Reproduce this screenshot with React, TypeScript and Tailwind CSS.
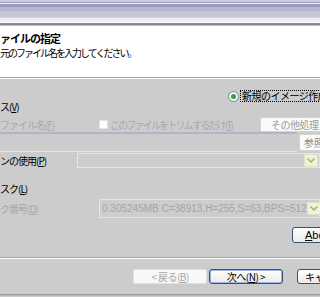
import React from "react";

const jp = { fontFamily: '"Noto Sans CJK JP", "Liberation Sans", sans-serif' };

function Arrow() {
  return (
    <div className="w-[14px] h-[13px] bg-[#f2f2dc] border border-[#e0e0c4] flex items-center justify-center shrink-0">
      <svg width="8" height="5" viewBox="0 0 8 5">
        <path d="M0.5 0.5 L4 4 L7.5 0.5" fill="none" stroke="#a8a868" strokeWidth="1.4" />
      </svg>
    </div>
  );
}

export default function App() {
  const stripes: [number, string][] = [
    [2, "#cacad8"],
    [1, "#9c9cb8"],
    [1, "#f4f4f8"],
    [3, "#9a9ac0"],
    [4, "#b6b6cc"],
    [6, "#c6c6d6"],
    [1, "#d6d6de"],
    [4, "#eeeef2"],
    [1, "#ffffff"],
    [2, "#8a8a8a"],
    [1, "#bcbcbc"],
  ];
  return (
    <div
      className="w-[320px] h-[297px] overflow-hidden bg-[#cccccc] flex flex-col text-[10px] text-black"
      style={jp}
    >
      {stripes.map(([h, c], i) => (
        <div key={i} className="w-full shrink-0" style={{ height: h, background: c }} />
      ))}
      {/* header */}
      <div className="h-[51px] bg-white shrink-0 flex flex-col pt-[6px]">
        <div className="font-bold text-[11px] leading-[13px] tracking-[-1px] whitespace-nowrap">ァイルの指定</div>
        <div className="text-[10px] leading-[13px] tracking-[-2px] whitespace-nowrap mt-[1px]">元のファイル名を入力してください。</div>
      </div>
      <div className="h-[1px] bg-[#a4a4a4] shrink-0" />
      <div className="h-[1px] bg-white shrink-0" />
      {/* gray area */}
      <div className="h-[178px] shrink-0 flex flex-col">
        {/* radio row */}
        <div className="h-[10px] mt-[12px] flex items-center pl-[228px] whitespace-nowrap">
          <svg width="11" height="11" viewBox="0 0 11 11" className="shrink-0">
            <circle cx="5.5" cy="5.5" r="5" fill="#f4f4f0" stroke="#6e8aa4" strokeWidth="1" />
            <circle cx="5.5" cy="5.5" r="2.5" fill="#3a9e3a" />
          </svg>
          <span className="ml-[1px] border border-dotted border-black px-[1px] leading-[10px] tracking-[-0.5px]">新規のイメージ作成</span>
        </div>
        <div className="h-[11px] leading-[11px] whitespace-nowrap tracking-[-1px]">
          ス(<span className="underline">V</span>)
        </div>
        {/* file row */}
        <div className="h-[16px] mt-[4px] flex items-center whitespace-nowrap text-[#a8a8a8]">
          <span className="w-[99px] shrink-0 tracking-[-1px]">ファイル名(<span className="underline">F</span>)</span>
          <span className="w-[9px] h-[9px] bg-white border border-[#e4e4e4] shrink-0" />
          <span className="ml-[2px] w-[150px] shrink-0 tracking-[-1.8px]">このファイルをトリムするだけ(<span className="underline">T</span>)</span>
          <div className="w-[70px] h-[15px] bg-[#fafafa] border border-[#d4d4d4] rounded-[2px] flex items-center pl-[10px] text-[#9a9a9a] shrink-0 tracking-[-0.5px]">
            その他処理
          </div>
        </div>
        {/* textbox row */}
        <div className="h-[20px] flex items-start">
          <div className="w-[297px] h-[20px] border-t-[2px] border-t-[#b2b2c8] border-b border-b-[#e6e6e6] shrink-0" />
          <div className="ml-[2px] mt-[2px] w-[40px] h-[17px] bg-[#fafafa] border border-[#d4d4d4] rounded-[2px] flex items-center pl-[4px] text-[#8a8a8a] shrink-0 whitespace-nowrap">
            参照...
          </div>
        </div>
        {/* combo row */}
        <div className="h-[15px] mt-[1px] flex items-center whitespace-nowrap">
          <span className="w-[77px] shrink-0 tracking-[-1px]">ンの使用(<span className="underline">P</span>)</span>
          <div className="w-[243px] h-[15px] border border-[#e6e6e6] bg-[#cdcdcd] flex items-center justify-end pr-[1px] shrink-0">
            <Arrow />
          </div>
        </div>
        <div className="h-[11px] mt-[15px] leading-[11px] whitespace-nowrap tracking-[-1px]">
          スク(<span className="underline">L</span>)
        </div>
        {/* disk row */}
        <div className="h-[19px] mt-[5px] flex items-center whitespace-nowrap">
          <span className="w-[99px] shrink-0 text-[#a8a8a8] tracking-[-1px]">ク番号(<span className="underline">D</span>)</span>
          <div className="w-[221px] h-[19px] border border-[#e4e4e4] bg-[#cdcdcd] flex items-center justify-between pl-[2px] pr-[1px] shrink-0">
            <span className="text-[#a4a4a4] text-[10px]" style={{ fontFamily: '"Liberation Sans", sans-serif' }}>
              0.305245MB C=38913,H=255,S=63,BPS=512
            </span>
            <Arrow />
          </div>
        </div>
        {/* about row */}
        <div className="h-[16px] mt-[9px] flex pl-[292px]">
          <div
            className="w-[50px] h-[16px] bg-gradient-to-b from-white to-[#ecebe6] border border-[#3a4f78] rounded-[3px] flex items-center pl-[12px] shrink-0 text-[11px]"
            style={{ fontFamily: '"Liberation Sans", sans-serif' }}
          >
            <span className="underline">A</span>bout
          </div>
        </div>
      </div>
      <div className="h-[1px] bg-[#a4a4a4] shrink-0" />
      <div className="h-[1px] bg-white shrink-0" />
      {/* bottom buttons */}
      <div className="h-[35px] shrink-0 flex items-start pt-[10px] pl-[133px] whitespace-nowrap">
        <div className="w-[74px] h-[15px] bg-[#f8f8f8] border border-[#dedede] rounded-[2px] flex items-center justify-center text-[#a4a4a4] shrink-0 tracking-[-0.5px]">
          &lt; 戻る(<span className="underline">B</span>)
        </div>
        <div className="ml-[2px] w-[74px] h-[15px] bg-gradient-to-b from-white to-[#ecebe6] border border-[#3a4f78] rounded-[3px] shadow-[inset_0_0_0_1px_#9ab4e4] flex items-center justify-center shrink-0 tracking-[-0.5px]">
          次へ(<span className="underline">N</span>) &gt;
        </div>
        <div className="ml-[14px] w-[74px] h-[15px] bg-gradient-to-b from-white to-[#ecebe6] border border-[#3a4f78] rounded-[3px] flex items-center pl-[7px] shrink-0 tracking-[-0.5px]">
          キャンセル
        </div>
      </div>
      <div className="h-[1px] bg-[#9a9a9a] shrink-0" />
      <div className="h-[1px] bg-[#b8b8b8] shrink-0" />
      <div className="flex-1 bg-[#cccccc]" />
    </div>
  );
}
